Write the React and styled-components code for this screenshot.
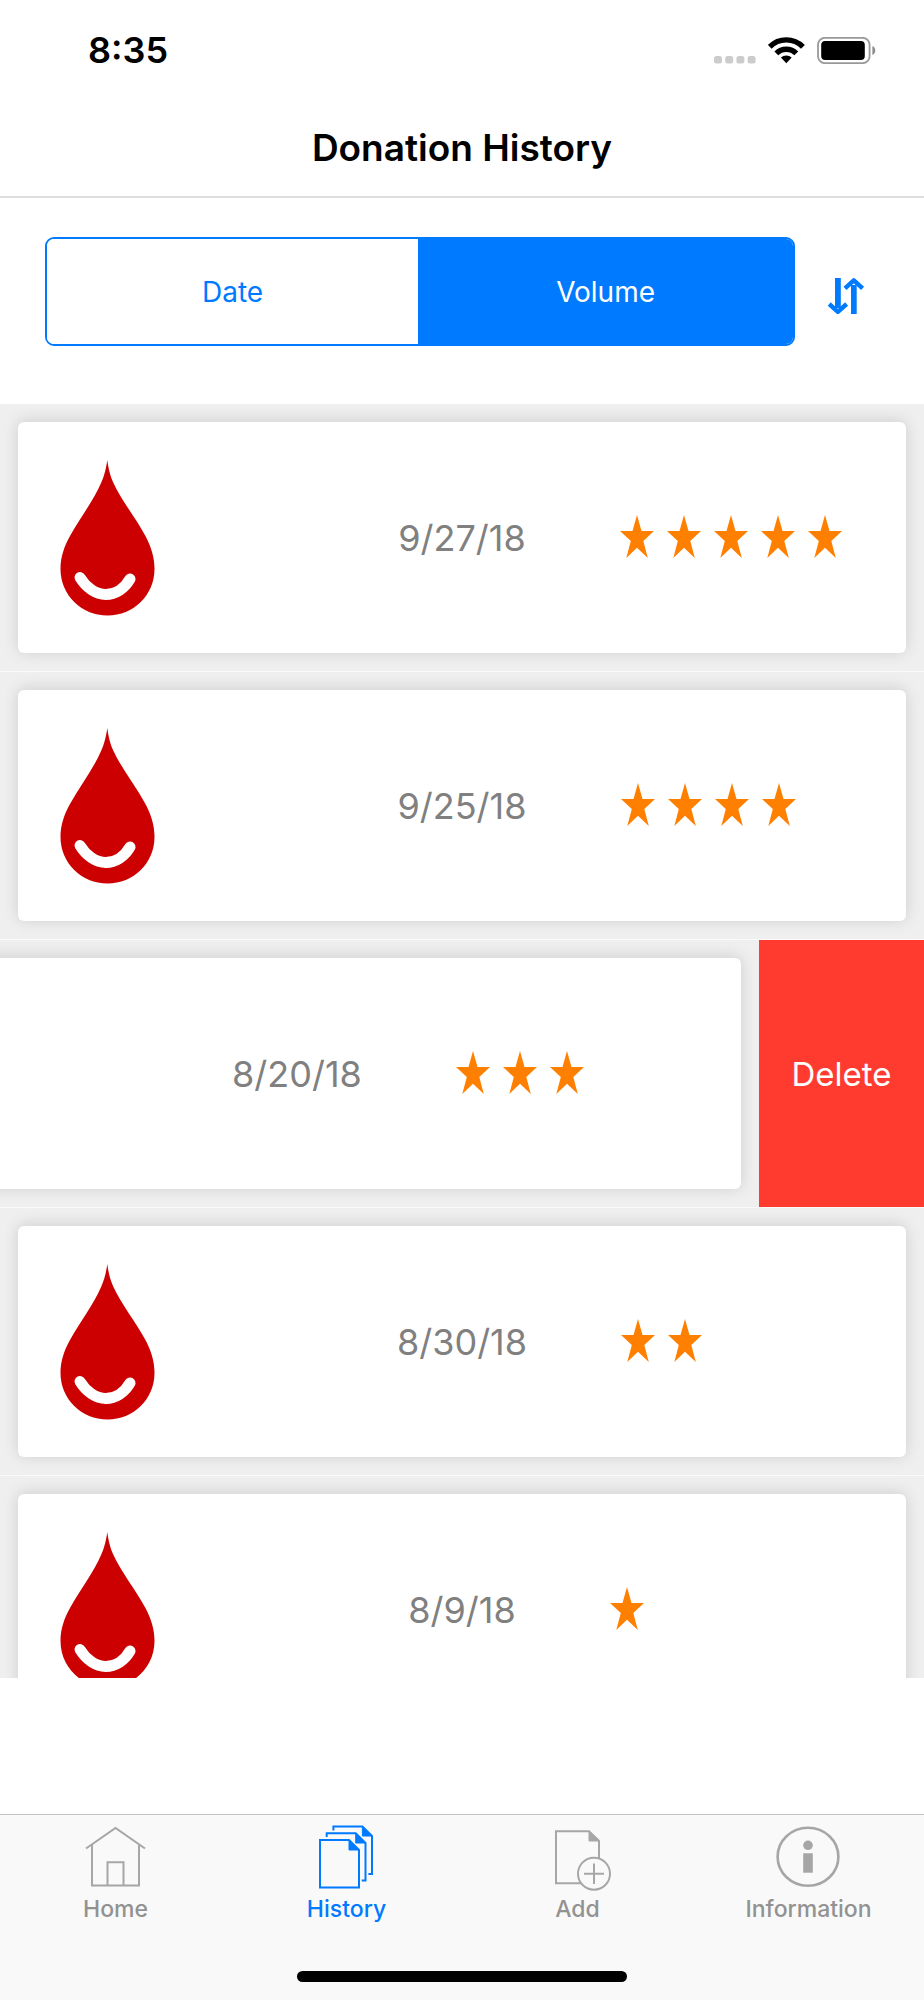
import styled, { createGlobalStyle } from 'styled-components';
import { useState } from 'react';

const GlobalStyle = createGlobalStyle`
	* {
		box-sizing: border-box;
	}

	body {
		margin: 0;
		background-color: white;
		font-family: Inter, "Liberation Sans", sans-serif;
	}

	button {
		font-family: inherit;
		border: none;
		background: none;
		padding: 0;
		cursor: pointer;
	}

	svg {
		display: block;
		flex: none;
	}
`;

const Container = styled.div`
	height: 100vh;
	display: flex;
	flex-direction: column;
`;

const StatusBar = styled.div`
	height: 100px;
	flex: none;
	padding: 0 48px 0 88px;
	display: flex;
	align-items: center;
	justify-content: space-between;
`;

const Time = styled.span`
	font-size: 36px;
	font-weight: 600;
	line-height: 44px;
`;

const StatusIcons = styled.div`
	display: flex;
	align-items: center;
	gap: 12px;
`;

const Header = styled.header`
	height: 98px;
	flex: none;
	display: flex;
	align-items: center;
	justify-content: center;
	border-bottom: 2px solid #dedede;
`;

const Title = styled.h1`
	margin: 0;
	font-size: 37px;
	font-weight: 600;
	line-height: 44px;
`;

const Toolbar = styled.div`
	flex: none;
	padding: 39px 59px 58px 45px;
	display: flex;
	align-items: center;
	gap: 32px;
`;

const Segments = styled.div`
	flex: 1;
	height: 109px;
	display: grid;
	grid-template-columns: 99fr 100fr;
	border: 2px solid #007aff;
	border-radius: 9px;
	overflow: hidden;
`;

const Segment = styled.button`
	font-size: 28px;
	line-height: 34px;
	color: ${(props) => (props.$active ? 'white' : '#007aff')};
	background-color: ${(props) => (props.$active ? '#007aff' : 'white')};
`;

const SortButton = styled.button`
	padding-top: 9px;
`;

const List = styled.ul`
	flex: 1;
	min-height: 0;
	margin: 0 0 136px;
	padding: 0;
	list-style: none;
	overflow: hidden;
`;

/* content is pushed out to the left when the delete button is open */
const Row = styled.li`
	display: flex;
	justify-content: flex-end;
	overflow: hidden;
	background-color: #efefef;
	border-bottom: 1px solid #fafafa;
`;

const RowContent = styled.div`
	flex: 0 0 100%;
	padding: 18px;
`;

const Card = styled.div`
	padding: 38px 42px 37px;
	display: grid;
	grid-template-columns: 1fr auto 1fr;
	align-items: center;
	background-color: white;
	border-radius: 6px;
	box-shadow: 0 -1px 16px rgba(0, 0, 0, 0.14);
`;

const DonationDate = styled.time`
	font-size: 36px;
	line-height: 44px;
	color: #808080;
`;

const Stars = styled.div`
	margin-left: 94px;
	display: flex;
	gap: 13px;
`;

const DeleteButton = styled.button`
	flex: none;
	width: 165px;
	font-size: 33px;
	line-height: 40px;
	color: white;
	background-color: #ff3b30;
`;

const TabBar = styled.nav`
	flex: none;
	height: 186px;
	display: flex;
	flex-direction: column;
	justify-content: space-between;
	align-items: center;
	padding-bottom: 18px;
	background-color: #f9f9f9;
	border-top: 1px solid #c4c4c4;
`;

const Tabs = styled.div`
	width: 100%;
	display: grid;
	grid-template-columns: repeat(4, 1fr);
`;

const Tab = styled.a`
	padding-top: 9px;
	display: flex;
	flex-direction: column;
	align-items: center;
	gap: 3px;
	font-size: 23px;
	font-weight: 500;
	line-height: 28px;
	text-decoration: none;
	color: ${(props) => (props.$active ? '#007aff' : '#929292')};

	svg {
		color: ${(props) => (props.$active ? '#007aff' : '#a6a6a6')};
	}
`;

const HomeIndicator = styled.div`
	width: 330px;
	height: 11px;
	border-radius: 6px;
	background-color: black;
`;

const SignalIcon = () => (
	<svg width="42" height="27" viewBox="0 0 42 27" fill="#cccccc">
		<rect x="0" y="19" width="8" height="7.5" rx="2.5" />
		<rect x="11.2" y="19" width="8" height="7.5" rx="2.5" />
		<rect x="22.4" y="19" width="8" height="7.5" rx="2.5" />
		<rect x="33.6" y="19" width="8" height="7.5" rx="2.5" />
	</svg>
);

const WifiIcon = () => (
	<svg width="37" height="27" viewBox="0 0 37 27" fill="none">
		<path
			d="M1.7 9.8A23.4 23.4 0 0 1 34.9 9.8M8.3 16.4A14 14 0 0 1 28.3 16.4"
			stroke="black"
			strokeWidth="5.4"
		/>
		<path d="M12.9 20.6A7.8 7.8 0 0 1 23.7 20.6L18.3 26.2Z" fill="black" />
	</svg>
);

const BatteryIcon = () => (
	<svg width="59" height="27" viewBox="0 0 59 27" fill="none">
		<rect x="1" y="0.8" width="51.6" height="25.4" rx="7" stroke="#999999" strokeWidth="1.8" />
		<rect x="4.2" y="4" width="43.6" height="19" rx="4" fill="black" />
		<path d="M55.4 9C59.2 10.5 59.2 16.5 55.4 18Z" fill="#8c8c8c" />
	</svg>
);

const SortIcon = () => (
	<svg width="38" height="37" viewBox="0 0 38 37" fill="none">
		<path d="M8 0H13.8V30H8ZM24 7H29.7V36H24Z" fill="#007aff" />
		<path
			d="M2.2 26L10.9 33.8L19.6 26M18 10.4L26.8 2.4L35.6 10.4"
			stroke="#007aff"
			strokeWidth="4.4"
			strokeLinejoin="round"
		/>
	</svg>
);

const DropIcon = () => (
	<svg width="95" height="156" viewBox="0 0 95 156">
		<path
			d="M47.3 0C46 9 44.5 15 41.5 22C34 40 20 58 10 76C4 87 0.5 97 0.5 109C0.5 135 21.5 155.5 47.5 155.5S94.5 135 94.5 109C94.5 97 91 87 86 77C76 58 61 40 53 22C50 15 48.5 9 47.3 0Z"
			fill="#cc0000"
		/>
		<path
			d="M20 117.5C26 127.5 36 134.5 45.7 134.5S64.5 128.5 70 119"
			fill="none"
			stroke="white"
			strokeWidth="11"
			strokeLinecap="round"
		/>
	</svg>
);

const StarIcon = () => (
	<svg width="34" height="47" viewBox="0 0 34 47">
		<path
			d="M17 0L21.5 16H34L23.3 26L27.8 43L17 32.7L6.3 43L10.8 26L0 16H12.5Z"
			fill="#ff8000"
		/>
	</svg>
);

const HomeIcon = () => (
	<svg width="71" height="68" viewBox="0 0 71 68" fill="none" stroke="currentColor">
		<path
			d="M6 24.5L35.5 4L65 24.5M12 21V61.5H59V21M27.5 61.5V38.2H43.5V61.5"
			strokeWidth="2"
		/>
	</svg>
);

const HistoryIcon = () => (
	<svg width="71" height="68" viewBox="0 0 71 68" fill="none" stroke="currentColor">
		<path
			d="M9 16H38L48 26V63.5H9ZM15.7 13V9.2H44.7L54.5 19V56.5H50.7M22.4 6.5V2.5H51.4L61 12V50H57.4"
			strokeWidth="2"
		/>
		<path
			d="M38 16L48 26H38ZM44.7 9.2L54.5 19H44.7ZM51.4 2.5L61 12H51.4Z"
			fill="currentColor"
			strokeWidth="1"
		/>
	</svg>
);

const AddIcon = () => (
	<svg width="71" height="68" viewBox="0 0 71 68" fill="none" stroke="currentColor">
		<path
			d="M57 34V17L47 7.3H14V59.3H39M52 39.5V60M42 49.7H62"
			strokeWidth="2"
		/>
		<path d="M47 7.3L57 17H47Z" fill="currentColor" strokeWidth="1" />
		<circle cx="52" cy="49.7" r="16" strokeWidth="2" />
	</svg>
);

const InfoIcon = () => (
	<svg width="71" height="68" viewBox="0 0 71 68" fill="currentColor">
		<ellipse
			cx="35"
			cy="32.7"
			rx="30.4"
			ry="29"
			fill="none"
			stroke="currentColor"
			strokeWidth="2.6"
		/>
		<circle cx="35" cy="21.3" r="4.8" />
		<rect x="30.2" y="29.3" width="9.6" height="19.4" />
	</svg>
);

const donations = [
	{ id: 1, date: '9/27/18', rating: 5 },
	{ id: 2, date: '9/25/18', rating: 4 },
	{ id: 3, date: '8/20/18', rating: 3 },
	{ id: 4, date: '8/30/18', rating: 2 },
	{ id: 5, date: '8/9/18', rating: 1 },
];

const tabs = [
	{ name: 'Home', Icon: HomeIcon },
	{ name: 'History', Icon: HistoryIcon },
	{ name: 'Add', Icon: AddIcon },
	{ name: 'Information', Icon: InfoIcon },
];

const App = () => {
	const [sortBy, setSortBy] = useState('Volume');
	const [items, setItems] = useState(donations);
	const [openId, setOpenId] = useState(3);

	const handleDelete = (id) => {
		setItems(items.filter((item) => item.id !== id));
		setOpenId(null);
	};

	return (
		<Container>
			<GlobalStyle />
			<StatusBar>
				<Time>8:35</Time>
				<StatusIcons>
					<SignalIcon />
					<WifiIcon />
					<BatteryIcon />
				</StatusIcons>
			</StatusBar>
			<Header>
				<Title>Donation History</Title>
			</Header>
			<Toolbar>
				<Segments>
					{['Date', 'Volume'].map((name) => (
						<Segment
							key={name}
							type="button"
							$active={sortBy === name}
							aria-pressed={sortBy === name}
							onClick={() => setSortBy(name)}
						>
							{name}
						</Segment>
					))}
				</Segments>
				<SortButton
					type="button"
					aria-label="Reverse order"
					onClick={() => setItems([...items].reverse())}
				>
					<SortIcon />
				</SortButton>
			</Toolbar>
			<List>
				{items.map((item) => (
					<Row key={item.id}>
						<RowContent>
							<Card>
								<DropIcon />
								<DonationDate>{item.date}</DonationDate>
								<Stars>
									{Array.from({ length: item.rating }, (_, i) => (
										<StarIcon key={i} />
									))}
								</Stars>
							</Card>
						</RowContent>
						{openId === item.id && (
							<DeleteButton type="button" onClick={() => handleDelete(item.id)}>
								Delete
							</DeleteButton>
						)}
					</Row>
				))}
			</List>
			<TabBar>
				<Tabs>
					{tabs.map(({ name, Icon }) => (
						<Tab key={name} href={`#${name.toLowerCase()}`} $active={name === 'History'}>
							<Icon />
							{name}
						</Tab>
					))}
				</Tabs>
				<HomeIndicator />
			</TabBar>
		</Container>
	);
};

export default App;
